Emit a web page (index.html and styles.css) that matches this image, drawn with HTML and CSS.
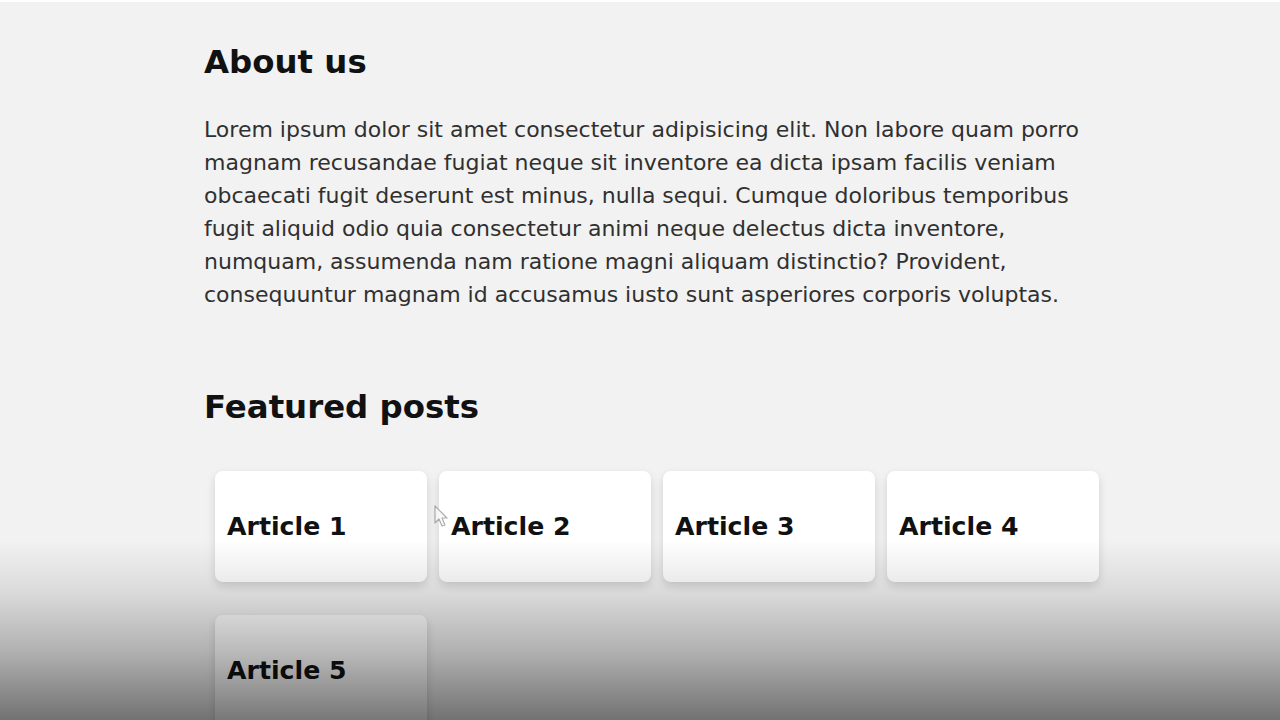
FILE: index.html
```html
<!DOCTYPE html>
<html lang="en">
<head>
<meta charset="utf-8">
<title>About us</title>
<link rel="stylesheet" href="styles.css">
</head>
<body>
<div class="topbar"></div>
<main class="content">
  <h2 class="title">About us</h2>
  <p class="intro">Lorem ipsum dolor sit amet consectetur adipisicing elit. Non labore quam porro magnam recusandae fugiat neque sit inventore ea dicta ipsam facilis veniam obcaecati fugit deserunt est minus, nulla sequi. Cumque doloribus temporibus fugit aliquid odio quia consectetur animi neque delectus dicta inventore, numquam, assumenda nam ratione magni aliquam distinctio? Provident, consequuntur magnam id accusamus iusto sunt asperiores corporis voluptas.</p>
  <h2 class="title featured">Featured posts</h2>
  <div class="posts">
    <article class="card"><h3>Article 1</h3></article>
    <article class="card"><h3>Article 2</h3></article>
    <article class="card"><h3>Article 3</h3></article>
    <article class="card"><h3>Article 4</h3></article>
    <article class="card"><h3>Article 5</h3></article>
  </div>
</main>
<svg class="cursor" width="16" height="24" viewBox="0 0 16 24" aria-hidden="true">
  <path d="M1 1 L1 18 L5 14 L8 21 L11 20 L8 13 L13 13 Z" fill="#fafafa" stroke="#9a9a9a" stroke-width="1.2" stroke-linejoin="round"/>
</svg>
<div class="shade"></div>
</body>
</html>
```
FILE: styles.css
```css
html, body {
  margin: 0;
  padding: 0;
}
body {
  background: #f2f2f2;
  font-family: "DejaVu Sans", Verdana, sans-serif;
  color: #2b2b2b;
  height: 720px;
  overflow: hidden;
  position: relative;
}
.topbar {
  height: 2px;
  background: #ffffff;
}
.content {
  padding: 42px 182px 0 204px;
}
.title {
  margin: 0;
  font-size: 32.4px;
  line-height: 37px;
  font-weight: bold;
  color: #111;
}
.intro {
  margin: 32px 0 0 0;
  font-size: 22px;
  line-height: 33px;
  color: #303030;
}
.featured {
  margin-top: 78px;
}
.posts {
  margin: 45px 0 0 11px;
  display: grid;
  grid-template-columns: repeat(4, 212px);
  column-gap: 12px;
  row-gap: 33px;
}
.card {
  height: 111px;
  background: #fff;
  border-radius: 8px;
  box-shadow: 0 4px 10px rgba(0,0,0,0.14);
  display: flex;
  align-items: center;
  padding-left: 12px;
}
.card h3 {
  margin: 0;
  font-size: 25.2px;
  font-weight: bold;
  color: #111;
}
.cursor {
  position: absolute;
  left: 434px;
  top: 505px;
  opacity: 0.8;
}
.shade {
  position: absolute;
  left: 0;
  right: 0;
  bottom: 0;
  height: 180px;
  pointer-events: none;
  background: linear-gradient(to bottom, rgba(0,0,0,0) 0%, rgba(0,0,0,0.1) 30%, rgba(0,0,0,0.27) 62%, rgba(0,0,0,0.53) 100%);
}
```
